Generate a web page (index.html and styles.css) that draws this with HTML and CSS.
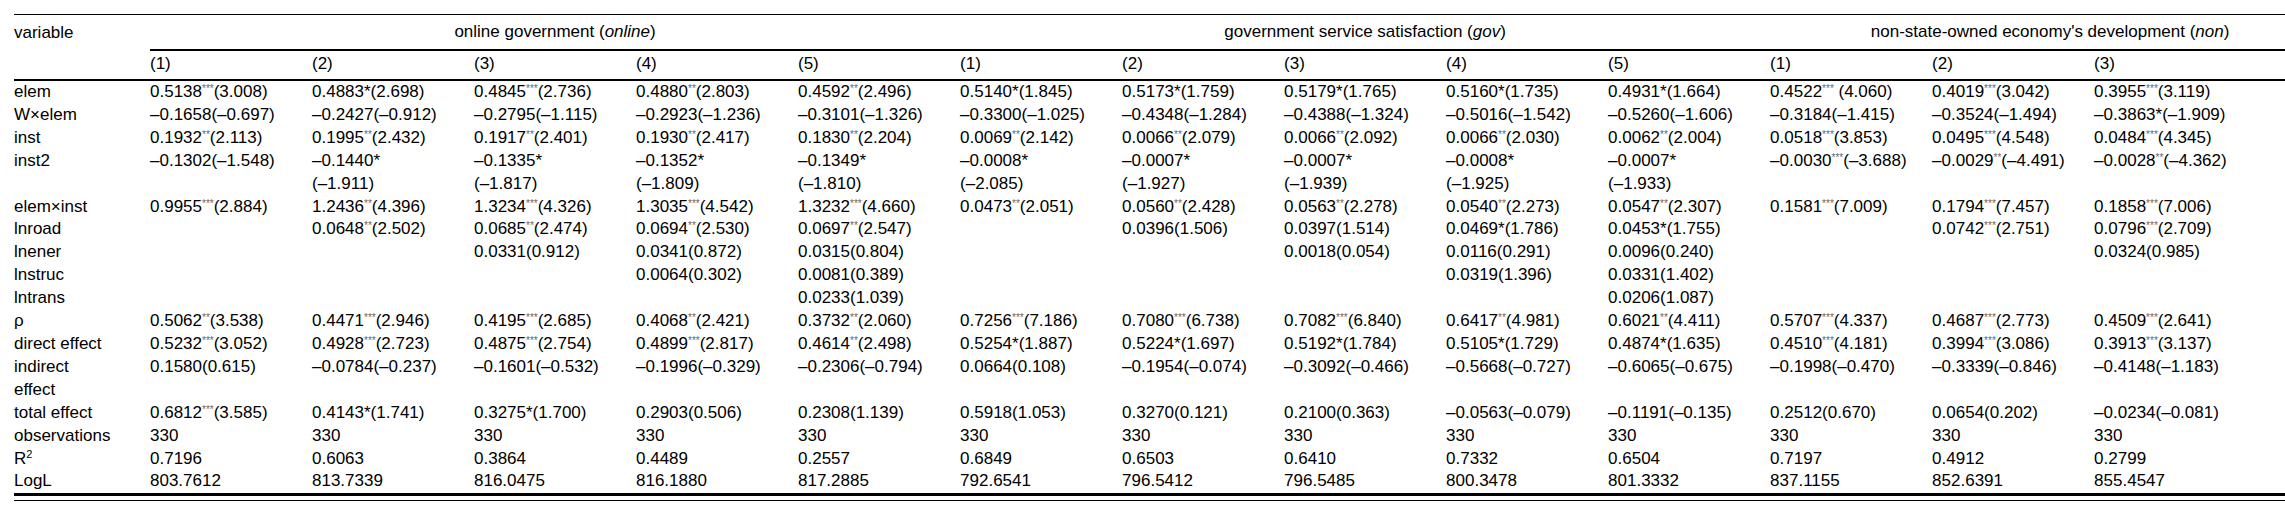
FILE: index.html
```html
<!DOCTYPE html>
<html>
<head>
<meta charset="utf-8">
<link rel="stylesheet" href="styles.css">
</head>
<body>
<div class="frame">
<table class="results">
<colgroup>
<col class="c-var">
<col class="c-num"><col class="c-num"><col class="c-num"><col class="c-num"><col class="c-num">
<col class="c-num"><col class="c-num"><col class="c-num"><col class="c-num"><col class="c-num">
<col class="c-num"><col class="c-num"><col class="c-last">
</colgroup>
<thead>
<tr class="grp-row">
<th class="var-head">variable</th>
<th class="grp" colspan="5">online government (<i>online</i>)</th>
<th class="grp" colspan="5">government service satisfaction (<i>gov</i>)</th>
<th class="grp" colspan="3">non-state-owned economy's development (<i>non</i>)</th>
</tr>
<tr class="sub-row">
<th></th>
<th>(1)</th><th>(2)</th><th>(3)</th><th>(4)</th><th>(5)</th>
<th>(1)</th><th>(2)</th><th>(3)</th><th>(4)</th><th>(5)</th>
<th>(1)</th><th>(2)</th><th>(3)</th>
</tr>
</thead>
<tbody>
<tr>
<td>elem</td>
<td>0.5138<span class="s">***</span>(3.008)</td><td>0.4883*(2.698)</td><td>0.4845<span class="s">***</span>(2.736)</td><td>0.4880<span class="s">**</span>(2.803)</td><td>0.4592<span class="s">**</span>(2.496)</td>
<td>0.5140*(1.845)</td><td>0.5173*(1.759)</td><td>0.5179*(1.765)</td><td>0.5160*(1.735)</td><td>0.4931*(1.664)</td>
<td>0.4522<span class="s">***</span> (4.060)</td><td>0.4019<span class="s">***</span>(3.042)</td><td>0.3955<span class="s">***</span>(3.119)</td>
</tr>
<tr>
<td>W×elem</td>
<td>–0.1658(–0.697)</td><td>–0.2427(–0.912)</td><td>–0.2795(–1.115)</td><td>–0.2923(–1.236)</td><td>–0.3101(–1.326)</td>
<td>–0.3300(–1.025)</td><td>–0.4348(–1.284)</td><td>–0.4388(–1.324)</td><td>–0.5016(–1.542)</td><td>–0.5260(–1.606)</td>
<td>–0.3184(–1.415)</td><td>–0.3524(–1.494)</td><td>–0.3863*(–1.909)</td>
</tr>
<tr>
<td>inst</td>
<td>0.1932<span class="s">**</span>(2.113)</td><td>0.1995<span class="s">**</span>(2.432)</td><td>0.1917<span class="s">**</span>(2.401)</td><td>0.1930<span class="s">**</span>(2.417)</td><td>0.1830<span class="s">**</span>(2.204)</td>
<td>0.0069<span class="s">**</span>(2.142)</td><td>0.0066<span class="s">**</span>(2.079)</td><td>0.0066<span class="s">**</span>(2.092)</td><td>0.0066<span class="s">**</span>(2.030)</td><td>0.0062<span class="s">**</span>(2.004)</td>
<td>0.0518<span class="s">***</span>(3.853)</td><td>0.0495<span class="s">***</span>(4.548)</td><td>0.0484<span class="s">***</span>(4.345)</td>
</tr>
<tr>
<td>inst2</td>
<td>–0.1302(–1.548)</td><td>–0.1440*<br>(–1.911)</td><td>–0.1335*<br>(–1.817)</td><td>–0.1352*<br>(–1.809)</td><td>–0.1349*<br>(–1.810)</td>
<td>–0.0008*<br>(–2.085)</td><td>–0.0007*<br>(–1.927)</td><td>–0.0007*<br>(–1.939)</td><td>–0.0008*<br>(–1.925)</td><td>–0.0007*<br>(–1.933)</td>
<td>–0.0030<span class="s">***</span>(–3.688)</td><td>–0.0029<span class="s">**</span>(–4.491)</td><td>–0.0028<span class="s">**</span>(–4.362)</td>
</tr>
<tr>
<td>elem×inst</td>
<td>0.9955<span class="s">***</span>(2.884)</td><td>1.2436<span class="s">**</span>(4.396)</td><td>1.3234<span class="s">***</span>(4.326)</td><td>1.3035<span class="s">***</span>(4.542)</td><td>1.3232<span class="s">***</span>(4.660)</td>
<td>0.0473<span class="s">**</span>(2.051)</td><td>0.0560<span class="s">**</span>(2.428)</td><td>0.0563<span class="s">**</span>(2.278)</td><td>0.0540<span class="s">**</span>(2.273)</td><td>0.0547<span class="s">**</span>(2.307)</td>
<td>0.1581<span class="s">***</span>(7.009)</td><td>0.1794<span class="s">***</span>(7.457)</td><td>0.1858<span class="s">***</span>(7.006)</td>
</tr>
<tr>
<td>lnroad</td>
<td></td><td>0.0648<span class="s">**</span>(2.502)</td><td>0.0685<span class="s">**</span>(2.474)</td><td>0.0694<span class="s">**</span>(2.530)</td><td>0.0697<span class="s">**</span>(2.547)</td>
<td></td><td>0.0396(1.506)</td><td>0.0397(1.514)</td><td>0.0469*(1.786)</td><td>0.0453*(1.755)</td>
<td></td><td>0.0742<span class="s">***</span>(2.751)</td><td>0.0796<span class="s">***</span>(2.709)</td>
</tr>
<tr>
<td>lnener</td>
<td></td><td></td><td>0.0331(0.912)</td><td>0.0341(0.872)</td><td>0.0315(0.804)</td>
<td></td><td></td><td>0.0018(0.054)</td><td>0.0116(0.291)</td><td>0.0096(0.240)</td>
<td></td><td></td><td>0.0324(0.985)</td>
</tr>
<tr>
<td>lnstruc</td>
<td></td><td></td><td></td><td>0.0064(0.302)</td><td>0.0081(0.389)</td>
<td></td><td></td><td></td><td>0.0319(1.396)</td><td>0.0331(1.402)</td>
<td></td><td></td><td></td>
</tr>
<tr>
<td>lntrans</td>
<td></td><td></td><td></td><td></td><td>0.0233(1.039)</td>
<td></td><td></td><td></td><td></td><td>0.0206(1.087)</td>
<td></td><td></td><td></td>
</tr>
<tr>
<td>ρ</td>
<td>0.5062<span class="s">**</span>(3.538)</td><td>0.4471<span class="s">***</span>(2.946)</td><td>0.4195<span class="s">***</span>(2.685)</td><td>0.4068<span class="s">**</span>(2.421)</td><td>0.3732<span class="s">**</span>(2.060)</td>
<td>0.7256<span class="s">***</span>(7.186)</td><td>0.7080<span class="s">***</span>(6.738)</td><td>0.7082<span class="s">***</span>(6.840)</td><td>0.6417<span class="s">**</span>(4.981)</td><td>0.6021<span class="s">**</span>(4.411)</td>
<td>0.5707<span class="s">***</span>(4.337)</td><td>0.4687<span class="s">***</span>(2.773)</td><td>0.4509<span class="s">***</span>(2.641)</td>
</tr>
<tr>
<td>direct effect</td>
<td>0.5232<span class="s">***</span>(3.052)</td><td>0.4928<span class="s">***</span>(2.723)</td><td>0.4875<span class="s">***</span>(2.754)</td><td>0.4899<span class="s">***</span>(2.817)</td><td>0.4614<span class="s">**</span>(2.498)</td>
<td>0.5254*(1.887)</td><td>0.5224*(1.697)</td><td>0.5192*(1.784)</td><td>0.5105*(1.729)</td><td>0.4874*(1.635)</td>
<td>0.4510<span class="s">***</span>(4.181)</td><td>0.3994<span class="s">***</span>(3.086)</td><td>0.3913<span class="s">***</span>(3.137)</td>
</tr>
<tr>
<td>indirect<br>effect</td>
<td>0.1580(0.615)</td><td>–0.0784(–0.237)</td><td>–0.1601(–0.532)</td><td>–0.1996(–0.329)</td><td>–0.2306(–0.794)</td>
<td>0.0664(0.108)</td><td>–0.1954(–0.074)</td><td>–0.3092(–0.466)</td><td>–0.5668(–0.727)</td><td>–0.6065(–0.675)</td>
<td>–0.1998(–0.470)</td><td>–0.3339(–0.846)</td><td>–0.4148(–1.183)</td>
</tr>
<tr>
<td>total effect</td>
<td>0.6812<span class="s">***</span>(3.585)</td><td>0.4143*(1.741)</td><td>0.3275*(1.700)</td><td>0.2903(0.506)</td><td>0.2308(1.139)</td>
<td>0.5918(1.053)</td><td>0.3270(0.121)</td><td>0.2100(0.363)</td><td>–0.0563(–0.079)</td><td>–0.1191(–0.135)</td>
<td>0.2512(0.670)</td><td>0.0654(0.202)</td><td>–0.0234(–0.081)</td>
</tr>
<tr>
<td>observations</td>
<td>330</td><td>330</td><td>330</td><td>330</td><td>330</td>
<td>330</td><td>330</td><td>330</td><td>330</td><td>330</td>
<td>330</td><td>330</td><td>330</td>
</tr>
<tr>
<td>R<sup class="sq">2</sup></td>
<td>0.7196</td><td>0.6063</td><td>0.3864</td><td>0.4489</td><td>0.2557</td>
<td>0.6849</td><td>0.6503</td><td>0.6410</td><td>0.7332</td><td>0.6504</td>
<td>0.7197</td><td>0.4912</td><td>0.2799</td>
</tr>
<tr class="last-row">
<td>LogL</td>
<td>803.7612</td><td>813.7339</td><td>816.0475</td><td>816.1880</td><td>817.2885</td>
<td>792.6541</td><td>796.5412</td><td>796.5485</td><td>800.3478</td><td>801.3332</td>
<td>837.1155</td><td>852.6391</td><td>855.4547</td>
</tr>
</tbody>
</table>
</div>
</body>
</html>
```
FILE: styles.css
```css
html, body {
  margin: 0;
  padding: 0;
  background: #ffffff;
  overflow: hidden;
}

body {
  font-family: "Liberation Sans", Arial, Helvetica, sans-serif;
  font-size: 17px;
  color: #000000;
}

.frame {
  margin: 14px 0 0 14px;
  overflow: hidden;
  border-bottom: 1px solid #000000;
  padding-bottom: 4px;
}

.results {
  border-collapse: collapse;
  table-layout: fixed;
  width: 2316px;
  border-top: 1px solid #000000;
}

.c-var { width: 136px; }
.c-num { width: 162px; }
.c-last { width: 236px; }

.results th {
  font-weight: normal;
  text-align: left;
  white-space: nowrap;
  padding: 0;
  line-height: 23px;
}

.grp-row th {
  padding: 5px 0 6px 0;
}

.grp-row th.grp {
  text-align: center;
  border-bottom: 2px solid #000000;
}

.sub-row th {
  padding: 1px 0 4px 0;
  border-bottom: 2px solid #000000;
}

.results td {
  padding: 0 4px 0 0;
  line-height: 22.9px;
  vertical-align: top;
  white-space: nowrap;
  text-align: left;
}

.last-row td {
  border-bottom: 3px solid #000000;
}

.s {
  font-size: 10px;
  line-height: 0;
  vertical-align: 5px;
  color: #666666;
}

.sq {
  font-size: 11px;
  line-height: 0;
  vertical-align: 6px;
}
```
